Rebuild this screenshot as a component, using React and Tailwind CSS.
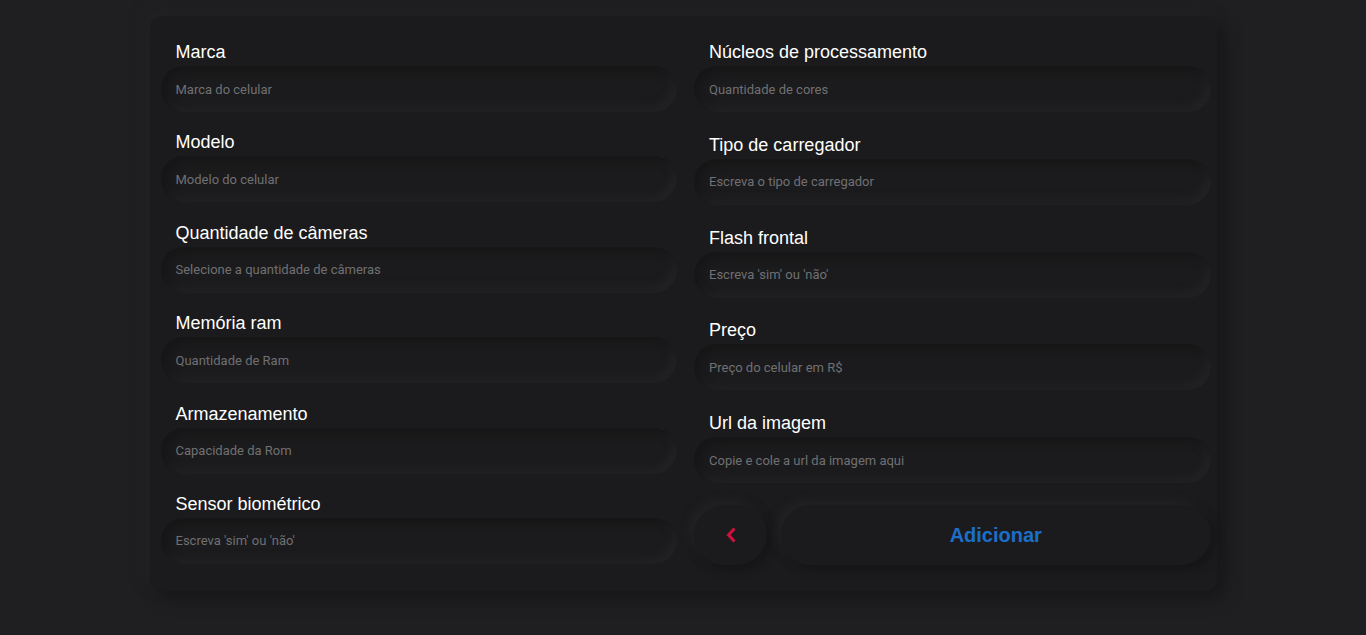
import React from "react";

const left = [
  ["Marca", "Marca do celular"],
  ["Modelo", "Modelo do celular"],
  ["Quantidade de câmeras", "Selecione a quantidade de câmeras"],
  ["Memória ram", "Quantidade de Ram"],
  ["Armazenamento", "Capacidade da Rom"],
  ["Sensor biométrico", "Escreva 'sim' ou 'não'"],
];

const right = [
  ["Núcleos de processamento", "Quantidade de cores"],
  ["Tipo de carregador", "Escreva o tipo de carregador"],
  ["Flash frontal", "Escreva 'sim' ou 'não'"],
  ["Preço", "Preço do celular em R$"],
  ["Url da imagem", "Copie e cole a url da imagem aqui"],
];

function Field({ label, placeholder }) {
  return (
    <div className="flex flex-col">
      <label className="pl-[15px] text-[18px] leading-[21px] text-white font-['Liberation_Sans',Arial,sans-serif]">
        {label}
      </label>
      <input
        placeholder={placeholder}
        className="mt-[3px] h-[46px] w-full rounded-full bg-[#1b1b1d] pl-[15px] text-[13px] text-[#8a8a8a] placeholder:text-[#707072] font-['Roboto',sans-serif] outline-none shadow-[inset_5px_5px_9px_#161617,inset_-5px_-5px_9px_#232325]"
      />
    </div>
  );
}

export default function App() {
  return (
    <div className="min-h-[635px] w-full bg-[#1f1f21] pt-[16px]">
      <div className="mx-auto w-[1067px] rounded-[12px] bg-[#1b1b1d] pl-[11px] pr-[6px] pt-[26px] pb-[26px] shadow-[8px_8px_16px_#171718,-6px_-6px_14px_#232325]">
        <div className="grid grid-cols-2 gap-x-[17px]">
          <div className="flex flex-col gap-[20.4px]">
            {left.map(([l, p]) => (
              <Field key={l} label={l} placeholder={p} />
            ))}
          </div>
          <div className="flex flex-col">
            <div className="flex flex-col gap-[22.75px]">
              {right.map(([l, p]) => (
                <Field key={l} label={l} placeholder={p} />
              ))}
            </div>
            <div className="mt-[22px] flex gap-[14px]">
              <button className="flex h-[60px] w-[73px] items-center justify-center rounded-[30px] bg-[#1b1b1d] shadow-[4px_4px_10px_#151516,-4px_-4px_10px_#242426]">
                <svg width="12" height="16" viewBox="0 0 12 16">
                  <polyline
                    points="8.5,2.5 3.5,8 8.5,13.5"
                    fill="none"
                    stroke="#d2103c"
                    strokeWidth="3"
                    strokeLinecap="square"
                  />
                </svg>
              </button>
              <button className="flex h-[60px] flex-1 items-center justify-center rounded-[30px] bg-[#1b1b1d] text-[20px] font-bold text-[#1b6fca] font-['Liberation_Sans',Arial,sans-serif] shadow-[4px_4px_10px_#151516,-4px_-4px_10px_#242426]">
                Adicionar
              </button>
            </div>
          </div>
        </div>
      </div>
    </div>
  );
}
